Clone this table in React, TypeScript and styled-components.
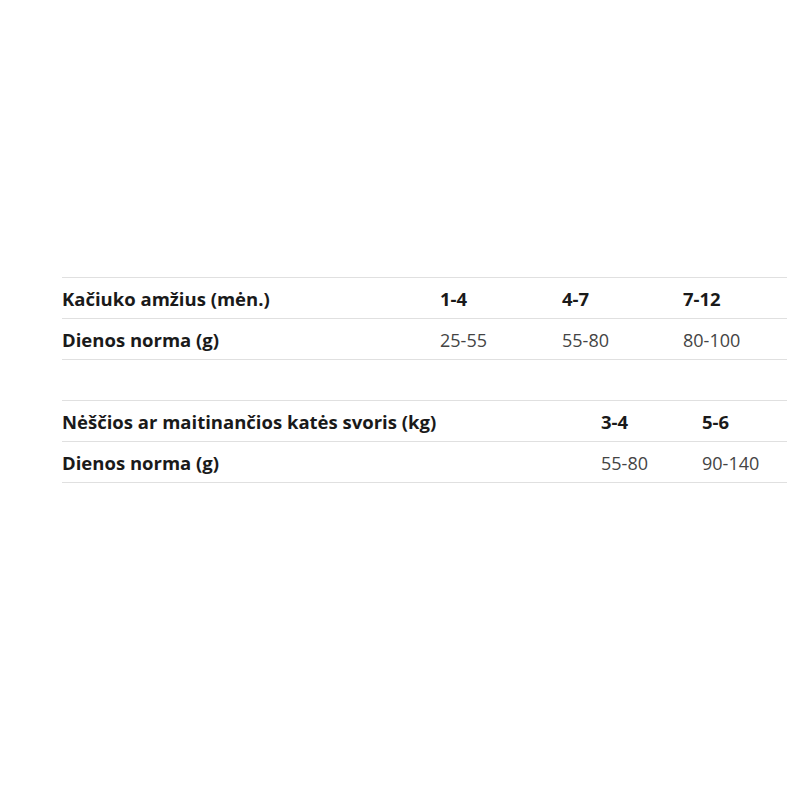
import React from 'react'
import styled, { createGlobalStyle } from 'styled-components'

const GlobalStyle = createGlobalStyle`
  html, body {
    margin: 0;
    padding: 0;
    background: #ffffff;
  }
  body {
    font-family: "Open Sans", "Noto Sans", sans-serif;
  }
`

const Page = styled.div`
  width: 800px;
  height: 800px;
  padding: 277px 13px 0 62px;
  box-sizing: border-box;
  display: flex;
  flex-direction: column;
  gap: 40px;
`

const Table = styled.table`
  width: 725px;
  border-collapse: collapse;
  table-layout: fixed;
`

const Row = styled.tr`
  height: 41px;
  border-top: 1px solid #e0e0e0;
  border-bottom: 1px solid #e0e0e0;
`

const Cell = styled.td<{ $head?: boolean; $label?: boolean }>`
  padding: 2px 0 0;
  font-size: ${(p) => (p.$head || p.$label ? '18.5px' : '18px')};
  line-height: 38px;
  white-space: nowrap;
  vertical-align: middle;
  font-weight: ${(p) => (p.$head || p.$label ? 700 : 400)};
  color: ${(p) => (p.$head || p.$label ? '#1a1a1a' : '#444444')};
`

interface FeedTableProps {
  widths: number[]
  head: string[]
  row: string[]
}

const FeedTable: React.FC<FeedTableProps> = ({ widths, head, row }) => (
  <Table>
    <colgroup>
      {widths.map((w, i) => (
        <col key={i} style={{ width: w }} />
      ))}
    </colgroup>
    <tbody>
      <Row>
        {head.map((t, i) => (
          <Cell key={i} $head>
            {t}
          </Cell>
        ))}
      </Row>
      <Row>
        {row.map((t, i) => (
          <Cell key={i} $label={i === 0}>
            {t}
          </Cell>
        ))}
      </Row>
    </tbody>
  </Table>
)

export default function App() {
  return (
    <>
      <GlobalStyle />
      <Page>
        <FeedTable
          widths={[378, 122, 121, 104]}
          head={['Kačiuko amžius (mėn.)', '1-4', '4-7', '7-12']}
          row={['Dienos norma (g)', '25-55', '55-80', '80-100']}
        />
        <FeedTable
          widths={[539, 101, 85]}
          head={['Nėščios ar maitinančios katės svoris (kg)', '3-4', '5-6']}
          row={['Dienos norma (g)', '55-80', '90-140']}
        />
      </Page>
    </>
  )
}
